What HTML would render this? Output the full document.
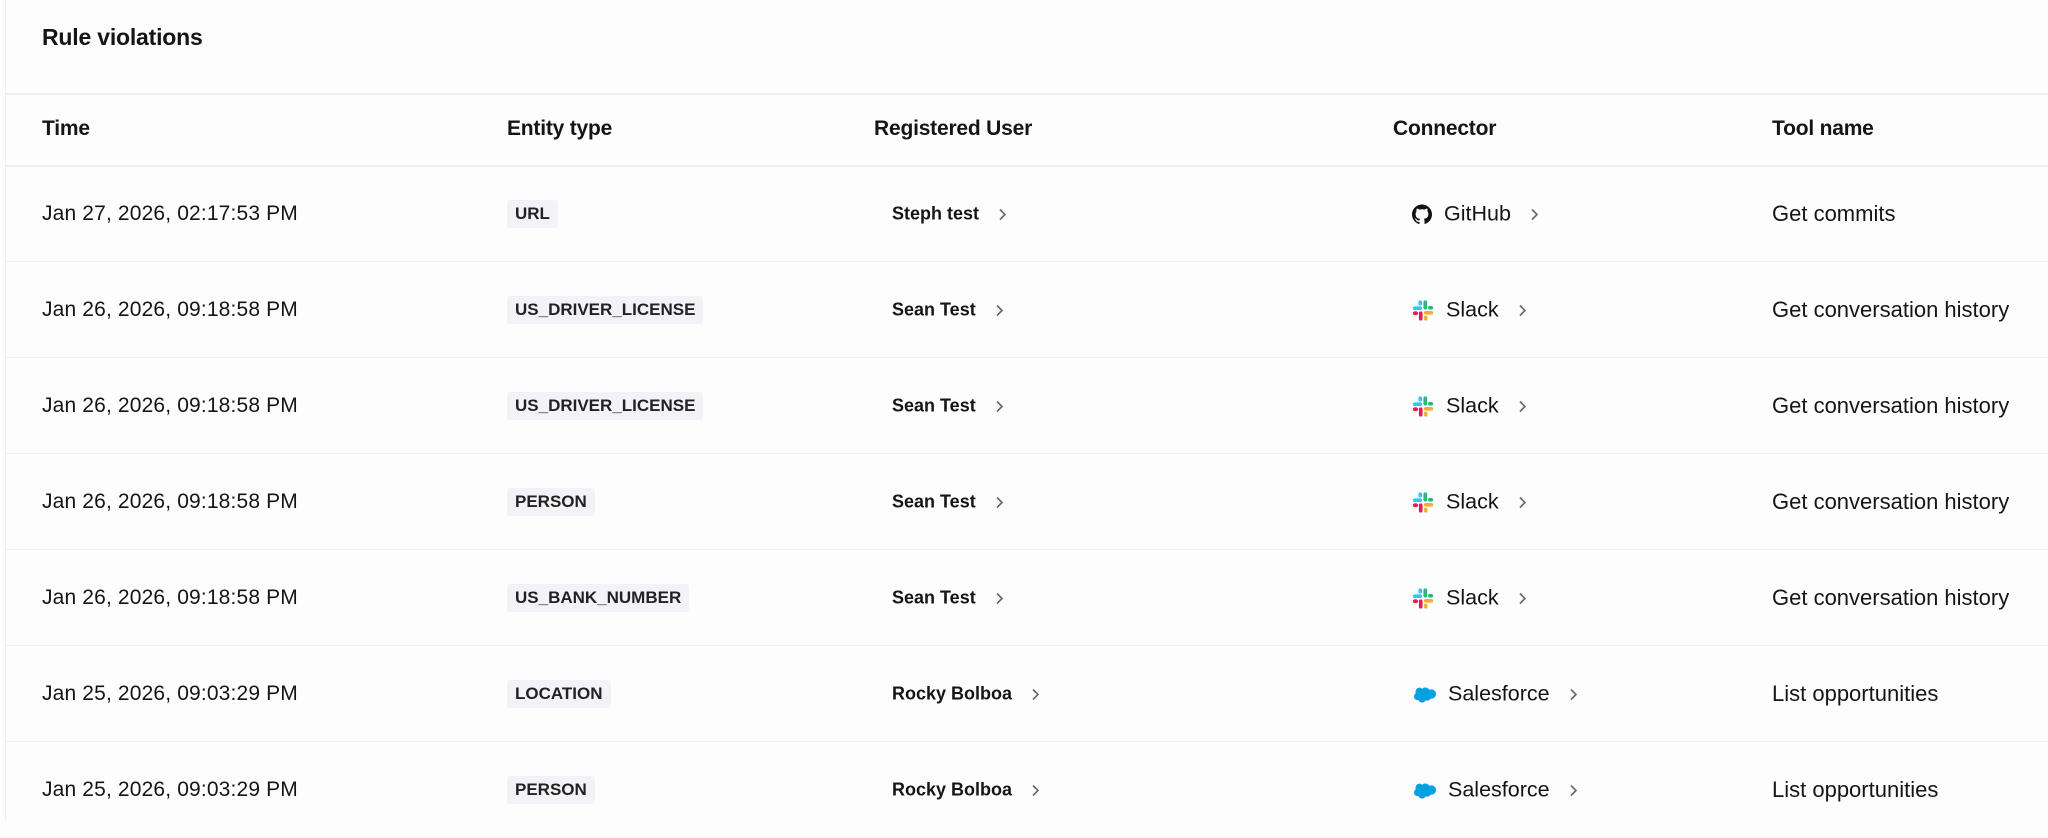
<!DOCTYPE html>
<html><head><meta charset="utf-8"><style>
*{margin:0;padding:0;box-sizing:border-box}
body{width:2048px;height:820px;background:#fdfdfe;font-family:"Liberation Sans",Arial,sans-serif;color:#151515;overflow:hidden;position:relative}
.lb{position:absolute;left:5px;top:0;width:1px;height:820px;background:#efeff2}
h1{position:absolute;left:42px;top:24px;font-size:23px;font-weight:700;letter-spacing:-0.2px}
.hl{position:absolute;left:6px;right:0;height:2px;background:#efeff2}
.h{position:absolute;top:117px;font-size:21px;font-weight:700;letter-spacing:-0.2px}
.row{position:absolute;left:0;width:2048px;height:96px}
.row>*{position:absolute;top:50%;transform:translateY(-50%)}
.t{left:42px;font-size:21px;letter-spacing:0.15px}
.b{left:507px;height:28px;line-height:28px;padding:0 8px;background:#f3f2f6;border-radius:3px;font-size:17px;font-weight:700;color:#222}
.u{left:892px;font-size:18px;font-weight:700;display:flex;align-items:center}
.c{left:1412px;font-size:21.5px;display:flex;align-items:center}
.tn{left:1772px;font-size:22px}
.ch{display:inline-block;margin-left:16px;width:14px;height:14px}
.ic{width:22px;height:22px;margin-right:12px;display:inline-block}
</style></head><body>
<div class="lb"></div>
<h1>Rule violations</h1>
<div class="hl" style="top:93px"></div>
<div class="h" style="left:42px">Time</div>
<div class="h" style="left:507px">Entity type</div>
<div class="h" style="left:874px">Registered User</div>
<div class="h" style="left:1393px">Connector</div>
<div class="h" style="left:1772px">Tool name</div>
<div class="hl" style="top:165px"></div>

<svg width="0" height="0" style="position:absolute">
<defs>
<symbol id="chev" viewBox="0 0 14 14"><path d="M5 2l5 5-5 5" fill="none" stroke="#666" stroke-width="1.6"/></symbol>
<symbol id="gh" viewBox="0 0 16 16"><path fill="#111" d="M8 0C3.6 0 0 3.6 0 8c0 3.5 2.3 6.5 5.5 7.6.4.1.5-.2.5-.4v-1.4c-2.2.5-2.7-1-2.7-1-.4-.9-.9-1.2-.9-1.2-.7-.5.1-.5.1-.5.8.1 1.2.8 1.2.8.7 1.2 1.9.9 2.3.7.1-.5.3-.9.5-1.1-1.8-.2-3.6-.9-3.6-4 0-.9.3-1.6.8-2.1-.1-.2-.4-1 .1-2.1 0 0 .7-.2 2.2.8.6-.2 1.3-.3 2-.3s1.4.1 2 .3c1.5-1 2.2-.8 2.2-.8.4 1.1.2 1.9.1 2.1.5.6.8 1.3.8 2.1 0 3.1-1.9 3.7-3.6 3.9.3.3.5.8.5 1.5v2.2c0 .2.1.5.6.4C13.7 14.5 16 11.5 16 8c0-4.4-3.6-8-8-8z"/></symbol>
<symbol id="sl" viewBox="0 0 24 24">
<rect x="1" y="7.5" width="10" height="4" rx="2" fill="#36c5f0"/><rect x="7" y="1" width="4" height="5.5" rx="2" fill="#36c5f0"/>
<rect x="12.5" y="1" width="4" height="10" rx="2" fill="#2eb67d"/><rect x="17.5" y="7" width="5.5" height="4" rx="2" fill="#2eb67d"/>
<rect x="13" y="12.5" width="10" height="4" rx="2" fill="#ecb22e"/><rect x="13" y="17.5" width="4" height="5.5" rx="2" fill="#ecb22e"/>
<rect x="7.5" y="13" width="4" height="10" rx="2" fill="#e01e5a"/><rect x="1" y="13" width="5.5" height="4" rx="2" fill="#e01e5a"/>
</symbol>
<symbol id="sf" viewBox="0 0 24 16"><path fill="#00a1e0" d="M10 2.5c.8-.9 2-1.5 3.3-1.5 1.7 0 3.2 1 4 2.4.7-.3 1.4-.5 2.2-.5 2.5 0 4.5 2.1 4.5 4.6s-2 4.6-4.5 4.6h-.9c-.6 1.2-1.8 2-3.3 2-.6 0-1.2-.1-1.7-.4-.6 1.4-2 2.3-3.6 2.3-1.7 0-3.1-1-3.7-2.5-.3.1-.5.1-.8.1C3.6 13.6 2 12 2 10c0-1.3.7-2.5 1.8-3.1-.2-.5-.3-1-.3-1.6C3.5 3 5.4 1.1 7.6 1.1c1 0 1.8.5 2.4 1.4z"/></symbol>
</defs></svg>

<div class="row" style="top:166px"><div class="t">Jan 27, 2026, 02:17:53 PM</div><div class="b">URL</div><div class="u">Steph test<svg class="ch"><use href="#chev"/></svg></div><div class="c"><svg class="ic" style="width:20px;height:20px"><use href="#gh"/></svg>GitHub<svg class="ch"><use href="#chev"/></svg></div><div class="tn">Get commits</div></div>
<div class="hl" style="top:261px;height:1px"></div>
<div class="row" style="top:262px"><div class="t">Jan 26, 2026, 09:18:58 PM</div><div class="b">US_DRIVER_LICENSE</div><div class="u">Sean Test<svg class="ch"><use href="#chev"/></svg></div><div class="c"><svg class="ic"><use href="#sl"/></svg>Slack<svg class="ch"><use href="#chev"/></svg></div><div class="tn">Get conversation history</div></div>
<div class="hl" style="top:357px;height:1px"></div>
<div class="row" style="top:358px"><div class="t">Jan 26, 2026, 09:18:58 PM</div><div class="b">US_DRIVER_LICENSE</div><div class="u">Sean Test<svg class="ch"><use href="#chev"/></svg></div><div class="c"><svg class="ic"><use href="#sl"/></svg>Slack<svg class="ch"><use href="#chev"/></svg></div><div class="tn">Get conversation history</div></div>
<div class="hl" style="top:453px;height:1px"></div>
<div class="row" style="top:454px"><div class="t">Jan 26, 2026, 09:18:58 PM</div><div class="b">PERSON</div><div class="u">Sean Test<svg class="ch"><use href="#chev"/></svg></div><div class="c"><svg class="ic"><use href="#sl"/></svg>Slack<svg class="ch"><use href="#chev"/></svg></div><div class="tn">Get conversation history</div></div>
<div class="hl" style="top:549px;height:1px"></div>
<div class="row" style="top:550px"><div class="t">Jan 26, 2026, 09:18:58 PM</div><div class="b">US_BANK_NUMBER</div><div class="u">Sean Test<svg class="ch"><use href="#chev"/></svg></div><div class="c"><svg class="ic"><use href="#sl"/></svg>Slack<svg class="ch"><use href="#chev"/></svg></div><div class="tn">Get conversation history</div></div>
<div class="hl" style="top:645px;height:1px"></div>
<div class="row" style="top:646px"><div class="t">Jan 25, 2026, 09:03:29 PM</div><div class="b">LOCATION</div><div class="u">Rocky Bolboa<svg class="ch"><use href="#chev"/></svg></div><div class="c"><svg class="ic" style="width:24px;height:18px"><use href="#sf"/></svg>Salesforce<svg class="ch"><use href="#chev"/></svg></div><div class="tn">List opportunities</div></div>
<div class="hl" style="top:741px;height:1px"></div>
<div class="row" style="top:742px"><div class="t">Jan 25, 2026, 09:03:29 PM</div><div class="b">PERSON</div><div class="u">Rocky Bolboa<svg class="ch"><use href="#chev"/></svg></div><div class="c"><svg class="ic" style="width:24px;height:18px"><use href="#sf"/></svg>Salesforce<svg class="ch"><use href="#chev"/></svg></div><div class="tn">List opportunities</div></div>
</body></html>
